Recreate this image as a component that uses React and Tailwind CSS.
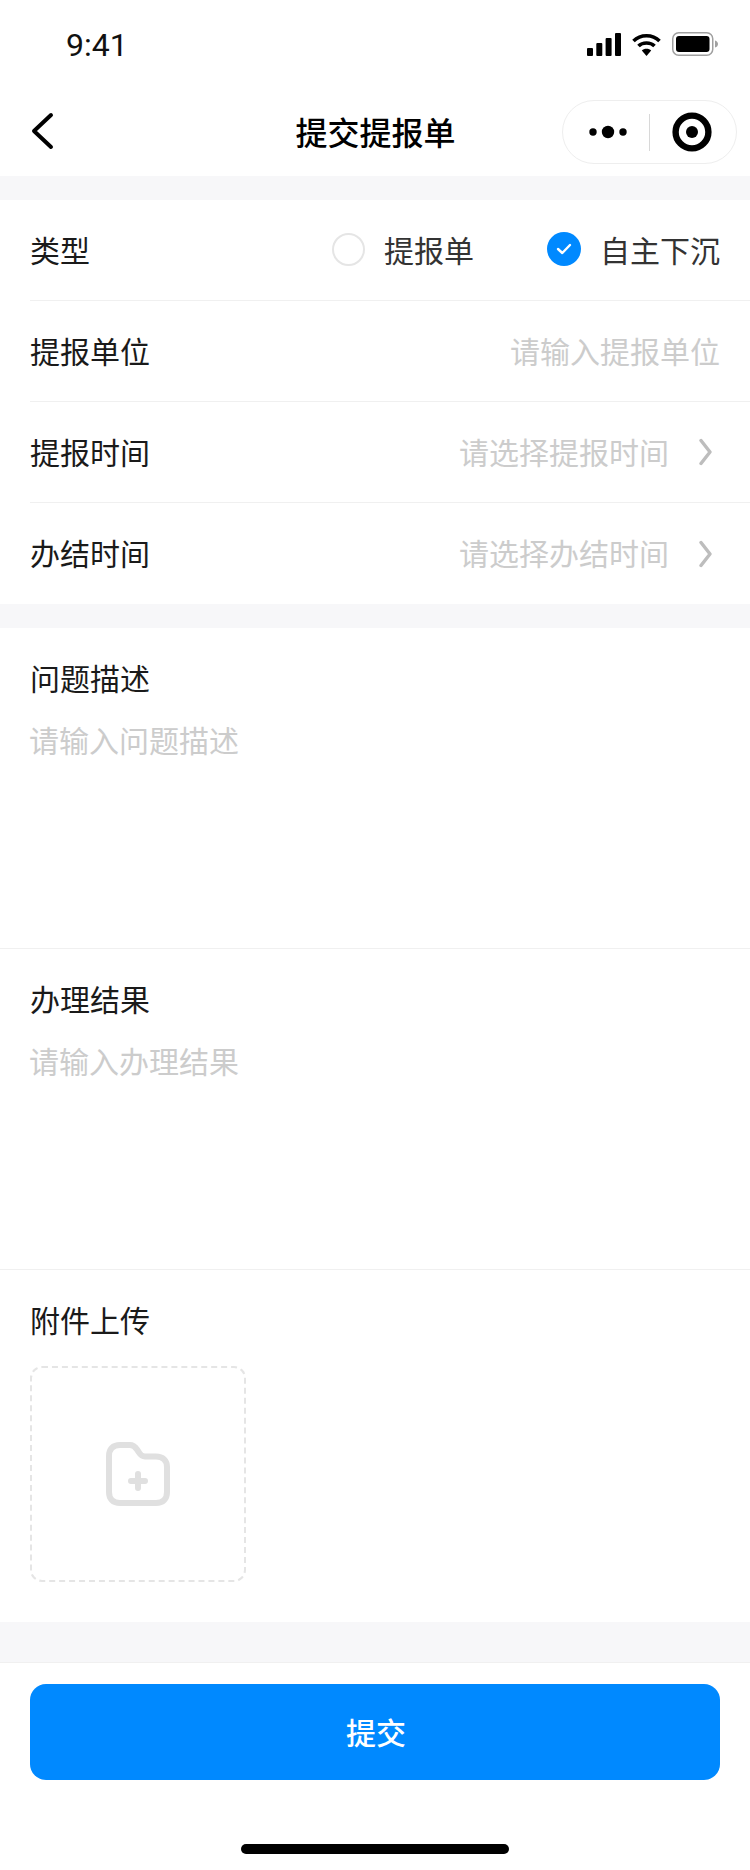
const CJK = { fontFamily: '"Noto Sans CJK SC", "Noto Sans", sans-serif' };

function Row({ label, children, border = true, pad = "pb-[3px]" }) {
  return (
    <div className={`ml-[30px] flex h-[101px] items-center justify-between pr-[30px] ${pad} ${border ? "border-b border-[#f0f0f0]" : ""}`}>
      <span className="text-[30px] leading-[42px] text-[#1a1a1a]">{label}</span>
      {children}
    </div>
  );
}

function Chevron() {
  return (
    <svg width="14" height="28" viewBox="0 0 14 28" fill="none" className="ml-[30px] mr-[7px] mt-[3px]">
      <path d="M2 2.5 L11 14 L2 25.5" stroke="#bdbdbd" strokeWidth="3.4" strokeLinecap="round" strokeLinejoin="round" />
    </svg>
  );
}

function TextBlock({ label, placeholder }) {
  return (
    <div className="h-[321px] border-b border-[#f0f0f0] px-[30px] pt-[28px]">
      <div className="text-[30px] leading-[42px] text-[#1a1a1a]">{label}</div>
      <div className="mt-[20px] -ml-px text-[30px] leading-[42px] text-[#cccccc]">{placeholder}</div>
    </div>
  );
}

export default function App() {
  return (
    <div className="flex h-[1870px] w-[750px] flex-col overflow-hidden bg-white" style={CJK}>
      {/* status bar */}
      <div className="flex h-[88px] items-start justify-between pl-[66px] pr-[30px] pt-[24px]">
        <span className="text-[32px] leading-[42px] text-[#111]" style={{ fontFamily: "Roboto, sans-serif" }}>9:41</span>
        <div className="flex items-center gap-[11px] pt-[8px]">
          <svg width="34" height="23" viewBox="0 0 34 23">
            <rect x="0" y="15" width="6" height="8" rx="1" fill="#000" />
            <rect x="9.3" y="10" width="6" height="13" rx="1" fill="#000" />
            <rect x="18.6" y="5" width="6" height="18" rx="1" fill="#000" />
            <rect x="28" y="0" width="6" height="23" rx="1" fill="#000" />
          </svg>
          <svg width="29" height="23" viewBox="0 0 29 23" fill="none">
            <path d="M1.5 8 C8.5 1 20.5 1 27.5 8" stroke="#000" strokeWidth="3.6" />
            <path d="M6.5 13 C10.5 9 18.5 9 22.5 13" stroke="#000" strokeWidth="3.6" />
            <path d="M14.5 23 L9.8 17.6 C12 15 17 15 19.2 17.6 Z" fill="#000" />
          </svg>
          <svg width="48" height="24" viewBox="0 0 48 24" fill="none">
            <rect x="0.75" y="0.75" width="40" height="22.5" rx="6" stroke="#a0a0a0" strokeWidth="1.5" />
            <rect x="4" y="4" width="33.5" height="16" rx="3" fill="#000" />
            <path d="M43 8.5 C45 9 46 10.5 46 12 C46 13.5 45 15 43 15.5 Z" fill="#a0a0a0" />
          </svg>
        </div>
      </div>

      {/* nav bar */}
      <div className="relative flex h-[88px] items-center justify-center pb-[3px]">
        <svg width="24" height="38" viewBox="0 0 24 38" fill="none" className="absolute left-[30px] top-[24px]">
          <path d="M21 3 L4 19 L21 35" stroke="#000" strokeWidth="4" strokeLinecap="round" strokeLinejoin="round" />
        </svg>
        <span className="ml-[1px] text-[32px] font-medium leading-[44px] text-black">提交提报单</span>
        <div className="absolute left-[562px] top-[12px] flex h-[64px] w-[175px] items-center rounded-full border border-[#eeeeee] bg-white">
          <svg width="52" height="14" viewBox="0 0 52 14" className="ml-[25px]">
            <circle cx="5" cy="7" r="3.7" fill="#000" />
            <circle cx="20" cy="7" r="6.2" fill="#000" />
            <circle cx="35" cy="7" r="3.7" fill="#000" />
          </svg>
          <div className="ml-[9px] h-[37px] w-px bg-[#d8d8d8]" />
          <svg width="42" height="42" viewBox="0 0 42 42" className="ml-[21px]">
            <circle cx="21" cy="21" r="16.4" fill="none" stroke="#000" strokeWidth="6.4" />
            <circle cx="21" cy="21" r="6" fill="#000" />
          </svg>
        </div>
      </div>

      <div className="h-[24px] bg-[#f7f7f9]" />

      {/* rows */}
      <Row label="类型" pad="pb-[2px]">
        <div className="flex items-center">
          <span className="h-[33px] w-[33px] rounded-full border-2 border-[#e5e5e5]" />
          <span className="ml-[19px] text-[30px] leading-[42px] text-[#333333]">提报单</span>
          <span className="ml-[73px] flex h-[34px] w-[34px] items-center justify-center rounded-full bg-[#0089ff]">
            <svg width="16" height="12" viewBox="0 0 16 12" fill="none">
              <path d="M2 6 L6.3 10 L14 2" stroke="#fff" strokeWidth="2.4" strokeLinecap="round" strokeLinejoin="round" />
            </svg>
          </span>
          <span className="ml-[19px] text-[30px] leading-[42px] text-[#333333]">自主下沉</span>
        </div>
      </Row>
      <Row label="提报单位">
        <span className="text-[30px] leading-[42px] text-[#cccccc]">请输入提报单位</span>
      </Row>
      <Row label="提报时间">
        <div className="flex items-center">
          <span className="text-[30px] leading-[42px] text-[#cccccc]">请选择提报时间</span>
          <Chevron />
        </div>
      </Row>
      <Row label="办结时间" border={false}>
        <div className="flex items-center">
          <span className="text-[30px] leading-[42px] text-[#cccccc]">请选择办结时间</span>
          <Chevron />
        </div>
      </Row>

      <div className="h-[24px] bg-[#f7f7f9]" />

      <TextBlock label="问题描述" placeholder="请输入问题描述" />
      <TextBlock label="办理结果" placeholder="请输入办理结果" />

      {/* upload */}
      <div className="h-[352px] px-[30px] pt-[28px]">
        <div className="text-[30px] leading-[42px] text-[#1a1a1a]">附件上传</div>
        <div className="mt-[26px] flex h-[216px] w-[216px] items-center justify-center rounded-[12px] border-2 border-dashed border-[#e5e5e5]">
          <svg width="64" height="64" viewBox="0 0 64 64" fill="none">
            <path d="M3 14 C3 7 7 3 14 3 H24 C27 3 29 4.5 31 7.5 L33 10.5 C34.5 13 36 14.5 39 14.5 H50 C57 14.5 61 18.5 61 25 V50 C61 57 57 61 50 61 H14 C7 61 3 57 3 50 Z" stroke="#e0e0e0" strokeWidth="6" strokeLinejoin="round" />
            <path d="M32 32 V46 M25 39 H39" stroke="#e0e0e0" strokeWidth="6" strokeLinecap="round" />
          </svg>
        </div>
      </div>

      <div className="h-[41px] border-b border-[#f0f0f0] bg-[#f7f7f9]" />

      {/* footer */}
      <div className="flex flex-1 flex-col items-center px-[30px] pt-[21px]">
        <button className="flex h-[96px] w-full items-center justify-center rounded-[16px] bg-[#0089ff] pb-[2px] pl-[2px] text-[30px] font-medium text-white">提交</button>
        <div className="mt-[64px] h-[10px] w-[268px] rounded-full bg-black" />
      </div>
    </div>
  );
}
